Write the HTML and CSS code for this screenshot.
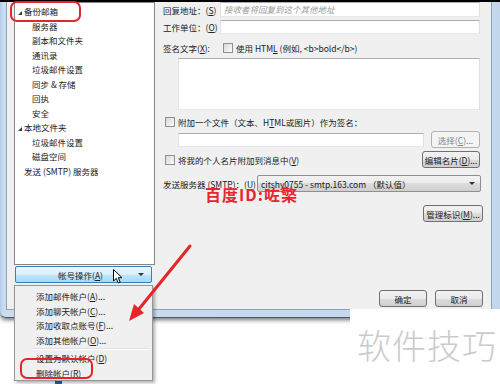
FILE: index.html
```html
<!DOCTYPE html>
<html lang="zh-CN">
<head>
    <meta charset="UTF-8">
    <meta name="viewport" content="width=device-width, initial-scale=1.0">
    <title>帐户设置</title>
    <link rel="stylesheet" href="styles.css">
</head>
<body>
    <div class="window">
        <div class="client">
            <div class="sidebar">
                <ul class="tree">
                    <li class="node"><span class="twisty"></span>备份邮箱</li>
                    <li class="leaf">服务器</li>
                    <li class="leaf">副本和文件夹</li>
                    <li class="leaf">通讯录</li>
                    <li class="leaf">垃圾邮件设置</li>
                    <li class="leaf">同步 &amp; 存储</li>
                    <li class="leaf">回执</li>
                    <li class="leaf">安全</li>
                    <li class="node"><span class="twisty"></span>本地文件夹</li>
                    <li class="leaf">垃圾邮件设置</li>
                    <li class="leaf">磁盘空间</li>
                    <li class="root">发送 (SMTP) 服务器</li>
                </ul>
                <div class="acct-btn"><span>帐号操作(<u>A</u>)</span><span class="caret"></span></div>
            </div>

            <div class="form">
                <div class="row row-reply">
                    <span class="lbl lbl-short">回复地址：(<u>S</u>)</span>
                    <div class="field"><span class="hint">接收者将回复到这个其他地址</span></div>
                </div>
                <div class="row row-org">
                    <span class="lbl lbl-short">工作单位：(<u>O</u>)</span>
                    <div class="field"></div>
                </div>
                <div class="row row-sig">
                    <span class="lbl lbl-sig">签名文字(<u>X</u>):</span>
                    <span class="check"></span>
                    <span>使用 HTM<u>L</u> (例如, &lt;b&gt;bold&lt;/b&gt;)</span>
                </div>
                <div class="field sig-box"></div>
                <div class="row row-attach">
                    <span class="check"></span>
                    <span>附加一个文件（文本、H<u>T</u>ML或图片）作为签名：</span>
                </div>
                <div class="row row-file">
                    <div class="field"></div>
                    <div class="btn btn-disabled btn-pick">选择(<u>C</u>)...</div>
                </div>
                <div class="row row-vcard">
                    <span class="check"></span>
                    <span>将我的个人名片附加到消息中(<u>V</u>)</span>
                    <div class="btn btn-vcard">编辑名片(<u>D</u>)...</div>
                </div>
                <div class="row row-smtp">
                    <span class="lbl lbl-smtp">发送服务器 (SMTP)：(<u>U</u>)</span>
                    <div class="select">
                        <span>citshy0755 - smtp.163.com （默认值）</span>
                        <span class="caret"></span>
                    </div>
                </div>
                <div class="row row-ident">
                    <div class="btn btn-ident">管理标识(<u>M</u>)...</div>
                </div>
                <div class="row row-actions">
                    <div class="btn btn-action">确定</div>
                    <div class="btn btn-action">取消</div>
                </div>
            </div>
        </div>
    </div>

    <div class="below"><span class="doc-icon"></span><span>附件设置</span></div>

    <!-- dropdown of the account button -->
    <ul class="menu">
        <li>添加邮件帐户(<u>A</u>)...</li>
        <li>添加聊天帐户(<u>C</u>)...</li>
        <li>添加收取点账号(<u>F</u>)...</li>
        <li>添加其他帐户(<u>O</u>)...</li>
        <li class="sep"></li>
        <li>设置为默认帐户(<u>D</u>)</li>
        <li>删除帐户(<u>R</u>)</li>
    </ul>

    <!-- annotations drawn on the screenshot -->
    <div class="callout callout-account"></div>
    <div class="callout callout-delete"></div>
    <svg class="annot" width="500" height="384" viewBox="0 0 500 384">
        <line x1="190" y1="246" x2="139" y2="309" stroke="#e3262a" stroke-width="3" stroke-linecap="round"/>
        <polygon points="129,321 144,313 134,304" fill="#e3262a"/>
    </svg>
    <svg class="pointer" width="10" height="15" viewBox="0 0 10 15">
        <path d="M0.5 0.5 V12 L3.3 9.4 L5.3 14 L7.2 13.2 L5.3 8.7 H9 Z" fill="#fff" stroke="#000" stroke-width="1"/>
    </svg>
    <div class="stamp">百度ID:咗檠</div>
    <div class="site-mark">软件技巧</div>
</body>
</html>
```

FILE: styles.css
```css
body {
    margin: 0;
    width: 500px;
    height: 384px;
    overflow: hidden;
    position: relative;
    background-color: #fff;
    color: #222;
    font-family: "Noto Sans CJK SC", "Liberation Sans", sans-serif;
    font-size: 8.5px;
    line-height: 14px;
}
u {
    text-decoration: underline;
}
.window {
    box-sizing: border-box;
    height: 318px;
    display: flex;
    border-top: 2px solid #000;
    border-bottom: 1px solid #4b5a6b;
    padding: 0 8px 7px 6px;
    background: linear-gradient(90deg, #b3cbe6, #c9dcf0 3px, #c3d7ec);
    border-bottom-left-radius: 6px;
    box-shadow: 0 2px 4px rgba(0, 0, 0, 0.55);
}
.client {
    flex: 1;
    display: flex;
    background-color: #f0f0f0;
    border: 1px solid #8da2bb;
    border-top: 0;
}
.sidebar {
    width: 148px;
    flex: none;
    box-sizing: border-box;
    padding-left: 7px;
}
.tree {
    list-style: none;
    margin: 0;
    padding: 1px 0 0;
    height: 263px;
    box-sizing: border-box;
    background-color: #fff;
    border: 1px solid #828790;
}
.tree li {
    height: 14.5px;
    line-height: 14.5px;
    white-space: nowrap;
}
.node {
    padding-left: 3px;
}
.leaf {
    padding-left: 17px;
}
.root {
    padding-left: 9px;
}
.twisty {
    display: inline-block;
    width: 0;
    height: 0;
    border-top: 4px solid transparent;
    border-right: 4px solid #3c3c3c;
    margin-right: 2px;
    vertical-align: middle;
}
.acct-btn {
    margin: 1px 0 0 1px;
    width: 137px;
    height: 17px;
    box-sizing: border-box;
    display: flex;
    align-items: center;
    justify-content: space-between;
    padding: 0 7px 0 42px;
    border: 1px solid #3c7fb1;
    border-radius: 2px;
    background: linear-gradient(#eaf6fd, #d9f0fc 50%, #bee6fd 50%, #a7d9f5);
}
.caret {
    width: 0;
    height: 0;
    border-top: 3px solid #333;
    border-left: 3px solid transparent;
    border-right: 3px solid transparent;
}
.form {
    flex: 1;
    display: flex;
    flex-direction: column;
    margin-left: 8px;
    padding: 0 11px 2px 0;
}
.row {
    display: flex;
    align-items: center;
    white-space: nowrap;
}
.lbl {
    flex: none;
}
.lbl-short {
    width: 57px;
}
.lbl-sig {
    width: 60px;
}
.lbl-smtp {
    width: 94px;
}
.field {
    flex: 1;
    align-self: stretch;
    box-sizing: border-box;
    background-color: #fff;
    border: 1px solid #abadb3;
    border-color: #abadb3 #dbdfe6 #e3e9ef #e2e3ea;
}
.hint {
    display: block;
    padding-left: 3px;
    line-height: 13px;
    color: #9a9a9a;
    font-style: italic;
}
.row-reply {
    height: 15px;
}
.row-org {
    height: 14px;
    margin-top: 3px;
}
.row-sig {
    height: 14px;
    margin-top: 7px;
}
.sig-box {
    flex: none;
    height: 52px;
    margin: 3px 0 0 15px;
}
.row-attach {
    height: 14px;
    margin-top: 5px;
    padding-left: 2px;
}
.row-file {
    height: 17px;
    margin-top: 2px;
    padding-left: 15px;
}
.row-file .field {
    align-self: center;
    height: 14px;
}
.row-vcard {
    height: 17px;
    margin-top: 3px;
    padding-left: 2px;
}
.row-smtp {
    height: 17px;
    margin-top: 7px;
}
.row-ident {
    height: 17px;
    margin-top: 13px;
    margin-right: -3px;
    justify-content: flex-end;
}
.row-actions {
    margin-top: auto;
    margin-right: -3px;
    justify-content: flex-end;
    gap: 8px;
}
.check {
    flex: none;
    width: 10px;
    height: 10px;
    box-sizing: border-box;
    margin-right: 3px;
    border: 1px solid #8f8f8f;
    background: linear-gradient(135deg, #d8d8d8, #fbfbfb);
}
.btn {
    flex: none;
    height: 17px;
    box-sizing: border-box;
    display: flex;
    align-items: center;
    justify-content: center;
    border: 1px solid #707070;
    border-radius: 3px;
    background: linear-gradient(#f2f2f2, #ebebeb 50%, #dddddd 50%, #cfcfcf);
}
.btn-disabled {
    color: #838383;
    border-color: #adb2b5;
    background: #f4f4f4;
}
.btn-pick {
    width: 49px;
    margin-left: 7px;
}
.btn-vcard {
    width: 58px;
    margin-left: auto;
}
.btn-ident {
    width: 60px;
}
.btn-action {
    width: 48px;
}
.select {
    flex: 1;
    align-self: stretch;
    margin-right: -1px;
    display: flex;
    align-items: center;
    justify-content: space-between;
    padding: 0 5px 0 3px;
    box-sizing: border-box;
    border: 1px solid #8e8f8f;
    border-radius: 2px;
    background: linear-gradient(#f2f2f2, #ebebeb 50%, #dddddd 50%, #cfcfcf);
}
.below {
    margin: 62px 0 0 55px;
    display: flex;
    align-items: flex-start;
    gap: 23px;
    color: #444;
}
.doc-icon {
    width: 7px;
    height: 8px;
    background-color: #2a5db0;
}
.menu {
    position: absolute;
    left: 14px;
    top: 285px;
    width: 139px;
    height: 96px;
    box-sizing: border-box;
    margin: 0;
    padding: 3px 0 0;
    list-style: none;
    background-color: #f0f0f0;
    border: 1px solid #979797;
    box-shadow: 2px 2px 3px rgba(0, 0, 0, 0.3);
}
.menu li {
    height: 14.5px;
    line-height: 14.5px;
    padding-left: 21px;
    white-space: nowrap;
}
.menu .sep {
    height: 4px;
    margin: 0 3px 0 18px;
    padding: 0;
    background: linear-gradient(transparent 1px, #e0e0e0 1px, #e0e0e0 2px, #fff 2px, #fff 3px, transparent 3px);
}
.callout {
    position: absolute;
    box-sizing: border-box;
    border: 2px solid #e3262a;
    border-radius: 7px;
}
.callout-account {
    left: 10px;
    top: 1px;
    width: 71px;
    height: 21px;
}
.callout-delete {
    left: 20px;
    top: 358px;
    width: 73px;
    height: 21px;
}
.annot {
    position: absolute;
    left: 0;
    top: 0;
    pointer-events: none;
}
.pointer {
    position: absolute;
    left: 113px;
    top: 269px;
}
.stamp {
    position: absolute;
    left: 205px;
    top: 185px;
    color: #e8242c;
    font-size: 16px;
    font-weight: bold;
    line-height: 18px;
    letter-spacing: 1px;
}
.site-mark {
    position: absolute;
    left: 350px;
    top: 309px;
    width: 150px;
    height: 75px;
    box-sizing: border-box;
    padding: 18px 0 0 7px;
    background-color: #fff;
    color: #cbcbcb;
    font-size: 34px;
    font-weight: 300;
    line-height: 35px;
    letter-spacing: 1px;
    white-space: nowrap;
}
```
